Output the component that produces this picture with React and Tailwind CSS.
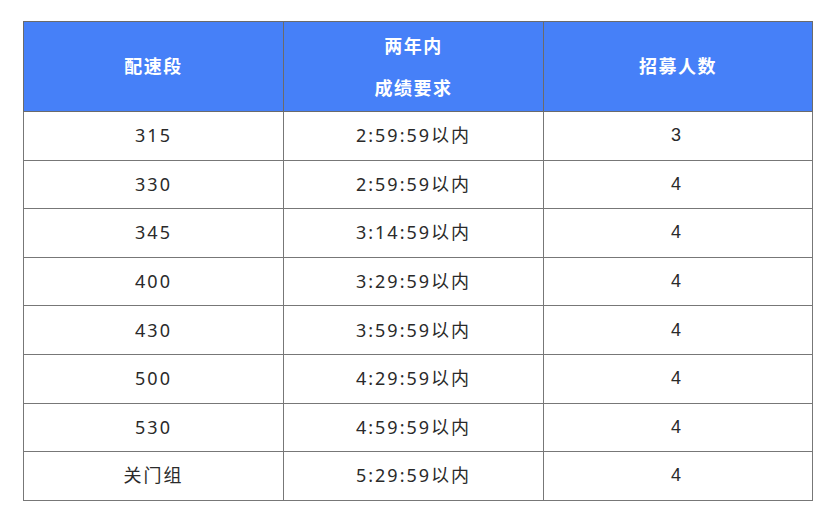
import React from "react";

const ROWS = [
  ["315", "2:59:59以内", "3"],
  ["330", "2:59:59以内", "4"],
  ["345", "3:14:59以内", "4"],
  ["400", "3:29:59以内", "4"],
  ["430", "3:59:59以内", "4"],
  ["500", "4:29:59以内", "4"],
  ["530", "4:59:59以内", "4"],
  ["关门组", "5:29:59以内", "4"],
];

const FONT = { fontFamily: '"Noto Sans", "Noto Sans CJK SC", sans-serif' };

export default function App() {
  return (
    <div className="w-[840px] h-[523px] bg-white pt-[21px] pl-[23px]" style={FONT}>
      <table className="border-collapse table-fixed w-[789px] text-[#2a2a2a]">
        <colgroup>
          <col className="w-[260px]" />
          <col className="w-[260px]" />
          <col className="w-[269px]" />
        </colgroup>
        <thead>
          <tr className="bg-[#4680f8] text-white font-bold text-[18px] h-[90px]">
            <th className="border border-[#6b6b6b] tracking-[1.5px]">配速段</th>
            <th className="border border-[#6b6b6b] tracking-[1.5px] leading-[42px]">
              <div>两年内</div>
              <div>成绩要求</div>
            </th>
            <th className="border border-[#6b6b6b] tracking-[1.5px]">招募人数</th>
          </tr>
        </thead>
        <tbody>
          {ROWS.map((r) => (
            <tr key={r[0]} className="h-[48.6px] text-[18px]">
              <td className="border border-[#777] text-center tracking-[2px]">{r[0]}</td>
              <td className="border border-[#777] text-center tracking-[2px]">{r[1]}</td>
              <td
                className="border border-[#777] text-center pr-[4px]"
                style={{ fontFamily: '"Liberation Sans", sans-serif' }}
              >
                {r[2]}
              </td>
            </tr>
          ))}
        </tbody>
      </table>
    </div>
  );
}
